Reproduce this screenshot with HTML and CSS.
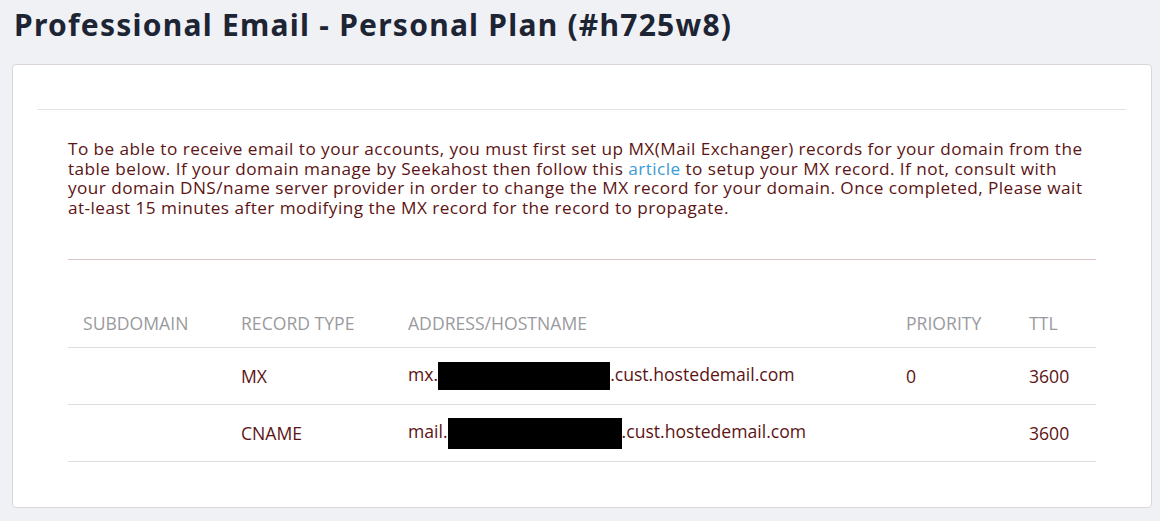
FILE: index.html
```html
<!DOCTYPE html>
<html lang="en">
<head>
    <meta charset="UTF-8">
    <title>Professional Email</title>
    <link rel="stylesheet" href="styles.css">
</head>
<body>

    <h1 class="page-title">Professional Email - Personal Plan (#h725w8)</h1>

    <div class="card">
        <div class="card-body">
            <div class="mx-info">
                <p class="notice">
                    To be able to receive email to your accounts, you must first set up MX(Mail Exchanger) records for your domain from the<br>
                    table below. If your domain manage by Seekahost then follow this <a href="#">article</a> to setup your MX record. If not, consult with<br>
                    your domain DNS/name server provider in order to change the MX record for your domain. Once completed, Please wait<br>
                    at-least 15 minutes after modifying the MX record for the record to propagate.
                </p>

                <table class="records">
                    <thead>
                        <tr>
                            <th class="col-sub">SUBDOMAIN</th>
                            <th class="col-type">RECORD TYPE</th>
                            <th class="col-addr">ADDRESS/HOSTNAME</th>
                            <th class="col-prio">PRIORITY</th>
                            <th class="col-ttl">TTL</th>
                        </tr>
                    </thead>
                    <tbody>
                        <tr>
                            <td></td>
                            <td>MX</td>
                            <td>mx.<span class="redact r1"></span>.cust.hostedemail.com</td>
                            <td>0</td>
                            <td>3600</td>
                        </tr>
                        <tr>
                            <td></td>
                            <td>CNAME</td>
                            <td>mail.<span class="redact r2"></span>.cust.hostedemail.com</td>
                            <td></td>
                            <td>3600</td>
                        </tr>
                    </tbody>
                </table>
            </div>
        </div>
    </div>

</body>
</html>
```

FILE: styles.css
```css
body {
    margin: 0;
    padding: 0 8px 0 12px;
    background: #f0f1f5;
    font-family: 'Open Sans', sans-serif;
}

.page-title {
    margin: 0;
    padding: 4px 0 0 2px;
    height: 60px;
    box-sizing: border-box;
    font-family: 'Noto Sans', sans-serif;
    font-size: 30px;
    font-weight: 700;
    color: #1d2433;
    letter-spacing: 1.25px;
}

.card {
    background: #fff;
    border: 1px solid #dcd6d8;
    border-radius: 4px;
    height: 444px;
    margin-top: 4px;
    box-sizing: border-box;
}

.card-body {
    padding: 44px 25px 0 24px;
}

.mx-info {
    border-top: 1px solid #e4e4e4;
    padding: 0 30px 0 31px;
}

.notice {
    margin: 0;
    padding: 29px 0 42px;
    border-bottom: 1px solid #dcc4c4;
    font-size: 17.2px;
    line-height: 19.5px;
    letter-spacing: 0.45px;
    white-space: nowrap;
    color: #5c1414;
}

.notice a {
    color: #3d9ad6;
    text-decoration: none;
}

.records {
    width: 100%;
    margin-top: 38px;
    border-collapse: collapse;
    font-size: 17.6px;
}

.records th {
    padding: 0 15px;
    height: 49px;
    text-align: left;
    font-weight: 400;
    color: #9a9a9e;
    vertical-align: middle;
}

.records td {
    padding: 0 15px;
    height: 56px;
    border-top: 1px solid #dedede;
    color: #5c1414;
    vertical-align: middle;
}

.records tbody tr:last-child td {
    border-bottom: 1px solid #dedede;
}

.col-sub { width: 128px; }
.col-type { width: 137px; }
.col-addr { width: 468px; }
.col-prio { width: 93px; }

.redact {
    display: inline-block;
    height: 28px;
    background: #000;
    vertical-align: middle;
}

.r1 { width: 172px; }
.r2 { width: 174px; height: 31px; }
```
